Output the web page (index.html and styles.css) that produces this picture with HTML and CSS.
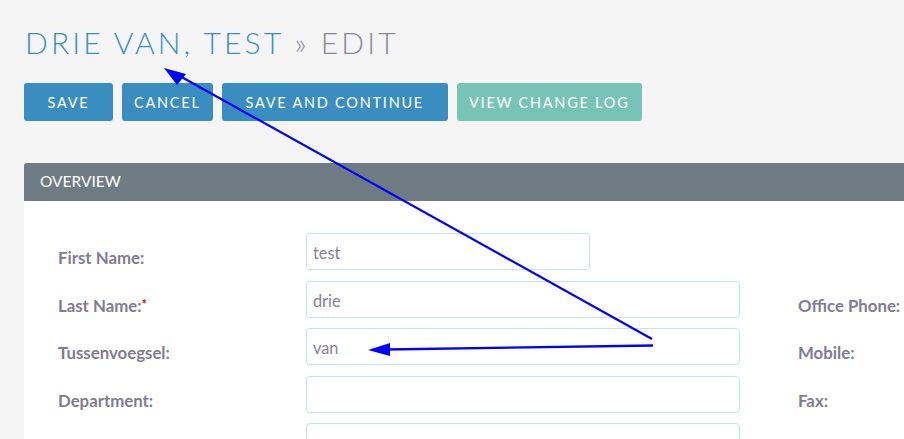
FILE: index.html
```html
<!DOCTYPE html>
<html>
<head>
<meta charset="utf-8">
<link rel="stylesheet" href="styles.css">
</head>
<body>
<div class="page">
  <h1 class="title"><span class="title-name">DRIE VAN, TEST</span> <span class="title-sep">»</span> <span class="title-action">EDIT</span></h1>
  <div class="actions">
    <button class="btn btn-wide">SAVE</button>
    <button class="btn">CANCEL</button>
    <button class="btn btn-pad">SAVE AND CONTINUE</button>
    <button class="btn btn-teal">VIEW CHANGE LOG</button>
  </div>
  <div class="panel">
    <div class="panel-head">OVERVIEW</div>
    <div class="panel-body">
      <div class="form-grid">
        <label class="lbl">First Name:</label>
        <div class="field"><input class="inp inp-short" value="test"></div>
        <div class="gapcol"></div>
        <div class="lbl"></div>

        <label class="lbl">Last Name:<span class="req">*</span></label>
        <div class="field"><input class="inp" value="drie"></div>
        <div class="gapcol"></div>
        <div class="lbl">Office Phone:</div>

        <label class="lbl">Tussenvoegsel:</label>
        <div class="field"><input class="inp" value="van"></div>
        <div class="gapcol"></div>
        <div class="lbl">Mobile:</div>

        <label class="lbl">Department:</label>
        <div class="field"><input class="inp" value=""></div>
        <div class="gapcol"></div>
        <div class="lbl">Fax:</div>

        <label class="lbl"></label>
        <div class="field"><input class="inp" value=""></div>
        <div class="gapcol"></div>
        <div class="lbl"></div>
      </div>
    </div>
  </div>
</div>
<svg class="annot" width="904" height="439" viewBox="0 0 904 439">
  <line x1="652" y1="339" x2="178" y2="75" stroke="#0000ff" stroke-width="2.2"/>
  <polygon points="164,68 186,74 177,85" fill="#0000ff"/>
  <line x1="653" y1="345.5" x2="386" y2="349.5" stroke="#0000ff" stroke-width="2.4"/>
  <polygon points="368,350 390,343 390,356" fill="#0000ff"/>
</svg>
</body>
</html>
```
FILE: styles.css
```css
html, body {
  margin: 0;
  padding: 0;
}
body {
  background: #f5f5f5;
  font-family: Lato, "Open Sans", sans-serif;
  width: 904px;
  height: 439px;
  overflow: hidden;
  position: relative;
}
.page {
  padding: 0 0 0 24px;
}
.title {
  margin: 0;
  padding-top: 24px;
  height: 83px;
  box-sizing: border-box;
  font-weight: 300;
  font-size: 30px;
  line-height: 36px;
  letter-spacing: 3.1px;
  padding-left: 1px;
  white-space: nowrap;
}
.title-name { color: #3d8fc2; }
.title-sep { color: #8b8898; }
.title-action { color: #8b8898; }
.actions {
  display: flex;
  gap: 9px;
  height: 38px;
}
.btn {
  font-family: Lato, sans-serif;
  font-size: 14.5px;
  letter-spacing: 1.75px;
  color: #fff;
  background: #3a8dbf;
  border: none;
  border-radius: 3px;
  height: 38px;
  padding: 0 12px;
  margin: 0;
}
.btn-wide {
  width: 89px;
}
.btn-pad {
  padding: 0 24px;
}
.btn-teal {
  background: #77c3b6;
}
.panel {
  margin-top: 42px;
  width: 960px;
}
.panel-head {
  background: #6f7b83;
  color: #fff;
  height: 38px;
  line-height: 37px;
  padding-left: 16px;
  font-size: 15.5px;
  border-radius: 3px 0 0 0;
}
.panel-body {
  background: #fff;
  padding: 32px 0 20px 34px;
}
.form-grid {
  display: grid;
  grid-template-columns: 248px 434px 58px 200px;
  grid-auto-rows: 37px;
  row-gap: 10.5px;
}
.lbl {
  font-weight: 700;
  font-size: 16.8px;
  line-height: 20px;
  color: #817d8e;
  padding-top: 15px;
  white-space: nowrap;
}
.req {
  color: #e00000;
  font-size: 13px;
  vertical-align: top;
  position: relative;
  top: -2px;
}
.field {
  display: flex;
}
.inp {
  box-sizing: border-box;
  width: 434px;
  height: 37px;
  border: 1px solid #c3e3f5;
  border-radius: 4px;
  padding: 2px 6px 0;
  font-family: Lato, sans-serif;
  font-size: 16.3px;
  color: #858192;
  background: #fff;
  outline: none;
}
.inp-short {
  width: 284px;
}
.annot {
  position: absolute;
  left: 0;
  top: 0;
  pointer-events: none;
}
```
